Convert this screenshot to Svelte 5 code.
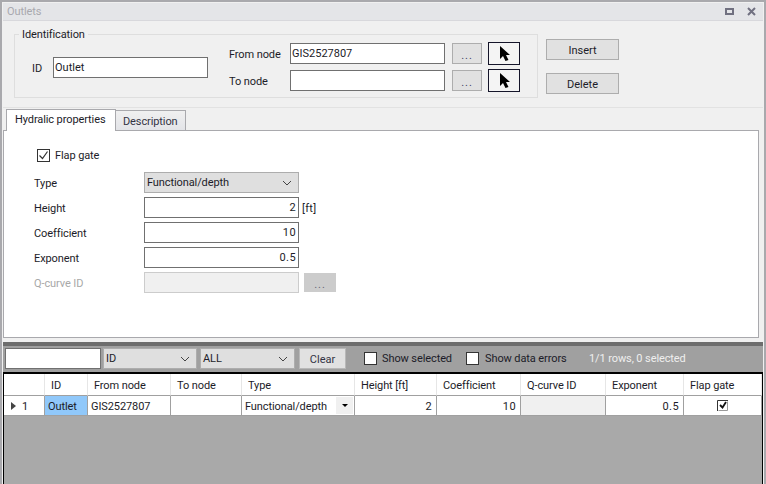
<script lang="ts">
	const columns = [
		{ label: 'ID', width: 43 },
		{ label: 'From node', width: 83 },
		{ label: 'To node', width: 71 },
		{ label: 'Type', width: 113 },
		{ label: 'Height [ft]', width: 82 },
		{ label: 'Coefficient', width: 84 },
		{ label: 'Q-curve ID', width: 85 },
		{ label: 'Exponent', width: 78 },
		{ label: 'Flap gate', width: 78 }
	];
	const fields = [
		{ label: 'Height', value: '2', unit: '[ft]' },
		{ label: 'Coefficient', value: '10' },
		{ label: 'Exponent', value: '0.5' }
	];
</script>

{#snippet arrow()}
	<svg width="11" height="15" viewBox="0 0 11 15">
		<path d="M1 0v13l3-3 2.500 5 3-1-2.500-5h4z" fill="#000" />
	</svg>
{/snippet}

{#snippet chevron()}
	<svg class="chevron" width="10" height="6" viewBox="0 0 10 6">
		<path d="M1 1l4 4 4-4" fill="none" stroke="#444" stroke-width="1" />
	</svg>
{/snippet}

<div class="window">
	<div class="titlebar">
		<span class="title">Outlets</span>
		<svg width="31" height="10" viewBox="0 0 31 10">
			<rect x="1" y="2" width="7" height="5" fill="none" stroke="#707080" stroke-width="2" />
			<path d="M23 1l7 7M30 1l-7 7" stroke="#707080" stroke-width="2" />
		</svg>
	</div>

	<div class="top">
		<fieldset class="identification">
			<legend>Identification</legend>
			<div class="id-body">
				<div class="id-row">
					<span>ID</span>
					<div class="input id-input">Outlet</div>
				</div>
				<div class="nodes">
					<span>From node</span>
					<div class="input">GIS2527807</div>
					<button class="btn dots">...</button>
					<button class="pick">{@render arrow()}</button>
					<span>To node</span>
					<div class="input"></div>
					<button class="btn dots">...</button>
					<button class="pick">{@render arrow()}</button>
				</div>
			</div>
		</fieldset>
		<div class="actions">
			<button class="btn action">Insert</button>
			<button class="btn action">Delete</button>
		</div>
	</div>

	<div class="tabs">
		<div class="tab active">Hydralic properties</div>
		<div class="tab">Description</div>
	</div>
	<div class="panel">
		<label class="flap">
			<span class="check">
				<svg width="11" height="11" viewBox="0 0 11 11"><path d="M1.500 5.500l3 3 5-7" fill="none" stroke="#333" stroke-width="1.200" /></svg>
			</span>
			Flap gate
		</label>
		<div class="form">
			<span>Type</span>
			<div class="select">Functional/depth {@render chevron()}</div>
			<span></span>
			{#each fields as field}
				<span>{field.label}</span>
				<div class="input number">{field.value}</div>
				<span class="unit">{field.unit ?? ''}</span>
			{/each}
			<span class="disabled">Q-curve ID</span>
			<div class="input off"></div>
			<button class="btn dots dark">...</button>
		</div>
	</div>

	<div class="strip"></div>
	<div class="toolbar">
		<div class="input search"></div>
		<div class="select tool-select id-select">ID {@render chevron()}</div>
		<div class="select tool-select">ALL {@render chevron()}</div>
		<button class="btn clear">Clear</button>
		<span class="box first-box"></span>
		<span class="opt show-selected">Show selected</span>
		<span class="box"></span>
		<span class="opt show-errors">Show data errors</span>
		<span class="count">1/1 rows, 0 selected</span>
	</div>

	<div class="grid">
		<table>
			<thead>
				<tr>
					<th class="row-head"></th>
					{#each columns as col}
						<th style="width: {col.width}px">{col.label}</th>
					{/each}
				</tr>
			</thead>
			<tbody>
				<tr>
					<td class="row-head"><span class="marker"></span>1</td>
					<td class="selected">Outlet</td>
					<td>GIS2527807</td>
					<td></td>
					<td class="type-cell">Functional/depth<span class="drop"><span></span></span></td>
					<td class="num">2</td>
					<td class="num">10</td>
					<td class="off-cell"></td>
					<td class="num">0.5</td>
					<td class="center">
						<svg width="11" height="11" viewBox="0 0 11 11">
							<path d="M.5 11V.5H11" fill="none" stroke="#333" />
							<path d="M1.500 10.500h9V1.500" fill="none" stroke="#999" />
							<path d="M3 5l2.500 2.500L9 2" fill="none" stroke="#111" stroke-width="1.800" />
						</svg>
					</td>
				</tr>
			</tbody>
		</table>
	</div>
</div>

<style>
	:global(body) {
		margin: 0;
		background: #f0f0f0;
	}

	.window {
		width: 766px;
		height: 484px;
		box-sizing: border-box;
		overflow: hidden;
		background: #f0f0f0;
		border-top: 2px solid #a9a9ad;
		border-left: 2px solid #a9a9ad;
		border-right: 2px solid #a9a9ad;
		padding: 1px 1px 0;
		font: 11px/14px Roboto, sans-serif;
		letter-spacing: -.1px;
		color: #1c1c28;
	}

	.titlebar {
		box-sizing: border-box;
		height: 18px;
		background: #e4e5e8;
		border-bottom: 1px solid #d8d8dc;
		display: flex;
		align-items: center;
		justify-content: space-between;
		padding: 0 7px 0 4px;
	}

	.title { color: #a8a8ae; }

	.top {
		height: 87px;
		box-sizing: border-box;
		display: flex;
		align-items: flex-start;
		gap: 8px;
		padding: 6px 0 0 11px;
		border-bottom: 1px solid #e2e2e2;
	}

	.identification {
		width: 524px;
		height: 71px;
		box-sizing: border-box;
		margin: 0;
		padding: 0;
		min-width: 0;
		border: 1px solid #dedede;
	}

	legend {
		padding: 1px 3px 0;
		margin-left: 4px;
		line-height: 14px;
	}

	.id-body {
		display: flex;
		gap: 21px;
		padding-left: 17px;
	}

	.id-row {
		width: 176px;
		display: flex;
		align-items: center;
		justify-content: space-between;
		margin-top: 15px;
		align-self: flex-start;
	}

	.id-row span,
	.nodes span,
	.form > span {
		padding-top: 2px;
	}

	.nodes {
		display: grid;
		grid-template-columns: 61px 155px 37px 36px;
		grid-template-rows: 23px 23px;
		row-gap: 4px;
		align-items: center;
	}

	.nodes .dots { margin-left: 7px; }
	.nodes .pick { margin-left: 6px; }

	.input {
		box-sizing: border-box;
		height: 21px;
		background: #fff;
		border: 1px solid #707070;
		line-height: 20px;
		letter-spacing: 0;
		padding: 0 1px;
		overflow: hidden;
	}

	.id-input { width: 155px; }

	.btn {
		box-sizing: border-box;
		background: #e1e1e1;
		border: 1px solid #adadad;
		font: inherit;
		color: inherit;
		padding: 2px 0 0;
	}

	.dots {
		width: 30px;
		height: 21px;
		padding: 4px 0 0;
		letter-spacing: 1px;
		color: #446;
	}

	.pick {
		box-sizing: border-box;
		width: 32px;
		height: 23px;
		padding: 0;
		background: #f4f4f4;
		border: 1px solid #15152a;
		display: flex;
		align-items: center;
		justify-content: center;
	}

	.actions {
		display: flex;
		flex-direction: column;
		gap: 13px;
		margin-top: 12px;
	}

	.action {
		width: 73px;
		height: 21px;
	}

	.tabs {
		height: 22px;
		display: flex;
		align-items: flex-end;
		padding-left: 3px;
	}

	.tab {
		box-sizing: border-box;
		width: 70px;
		height: 20px;
		background: linear-gradient(#f0f0f0, #e3e4e8);
		border: 1px solid #a9a9ad;
		border-bottom: none;
		border-left: none;
		padding: 4px 0 0 7px;
		color: #334;
	}

	.tab.active {
		width: 110px;
		height: 22px;
		background: #fff;
		border-left: 1px solid #a9a9ad;
		padding: 3px 0 0 8px;
		color: #1c1c28;
		position: relative;
		margin-bottom: -1px;
		z-index: 1;
	}

	.panel {
		box-sizing: border-box;
		width: 756px;
		height: 208px;
		background: #fff;
		border: 1px solid #a9a9ad;
		padding: 17px 0 0 30px;
	}

	.flap {
		display: flex;
		align-items: center;
		gap: 5px;
		margin-left: 3px;
		height: 15px;
	}

	.check {
		box-sizing: border-box;
		width: 13px;
		height: 13px;
		border: 1px solid #333;
		display: flex;
		align-items: center;
		justify-content: center;
	}

	.form {
		display: grid;
		grid-template-columns: 110px 155px auto;
		grid-auto-rows: 21px;
		row-gap: 4px;
		align-items: center;
		margin-top: 9px;
	}

	.select {
		box-sizing: border-box;
		height: 21px;
		background: #dfdfdf;
		border: 1px solid #adadad;
		padding: 1px 2px 0;
		display: flex;
		align-items: center;
		justify-content: space-between;
	}

	.chevron { margin-right: 4px; }

	.number {
		text-align: right;
		padding-right: 2px;
		letter-spacing: .4px;
	}

	.unit {
		margin-left: 3px;
		letter-spacing: .3px;
	}

	.disabled { color: #a8a8a8; }

	.off {
		background: #f0f0f0;
		border-color: #ccc;
	}

	.dark {
		width: 32px;
		height: 19px;
		margin-left: 5px;
		background: #ccc;
		border-color: #ccc;
		color: #667;
	}

	.strip {
		height: 8px;
		box-sizing: border-box;
		border-top: 4px solid #f0f0f0;
		background: #6d6d6d;
	}

	.toolbar {
		height: 26px;
		box-sizing: border-box;
		background: #a0a0a0;
		display: flex;
		align-items: center;
		padding: 0 0 1px 2px;
	}

	.search {
		width: 96px;
		flex: none;
	}

	.tool-select {
		width: 95px;
		margin-left: 3px;
		flex: none;
	}

	.id-select {
		width: 94px;
		margin-left: 2px;
	}

	.clear {
		width: 47px;
		height: 21px;
		margin-left: 4px;
		flex: none;
		border-color: #b8b8b8;
		color: #334;
	}

	.box {
		box-sizing: border-box;
		width: 13px;
		height: 13px;
		background: #fff;
		border: 1px solid #333;
		flex: none;
	}

	.first-box { margin-left: 18px; }
	.opt { margin-left: 5px; white-space: nowrap; }
	.show-selected { width: 84px; flex: none; }
	.show-errors { margin-left: 6px; width: 104px; flex: none; }
	.count { color: #efefef; white-space: nowrap; }

	.grid {
		height: 112px;
		box-sizing: border-box;
		background: #a9a9a9;
		border: 1px solid #000;
		border-top-width: 2px;
		border-bottom: none;
	}

	table {
		border-collapse: separate;
		border-spacing: 0;
		table-layout: fixed;
	}

	th, td {
		box-sizing: border-box;
		background: #fff;
		font-weight: 400;
		text-align: left;
		height: 20px;
		padding: 2px 0 0 3px;
		border-right: 1px solid #a0a0a0;
		border-bottom: 1px solid #a0a0a0;
		white-space: nowrap;
	}

	th {
		height: 22px;
		padding-left: 6px;
		border-right-color: #e6e6e6;
	}

	th.row-head { width: 41px; }
	td.row-head { padding-left: 7px; }

	.marker {
		display: inline-block;
		border-left: 5px solid #444;
		border-top: 4px solid transparent;
		border-bottom: 4px solid transparent;
		margin-right: 6px;
	}

	td.selected { background: #90c8fa; }
	td.num { text-align: right; padding-right: 4px; letter-spacing: .4px; }
	td.off-cell { background: #f0f0f0; }
	td.center { padding: 0; }
	td.center svg { display: block; margin: -1px 0 0 33px; }

	.type-cell { position: relative; }

	.drop {
		position: absolute;
		right: 1px;
		top: 1px;
		width: 17px;
		height: 17px;
		background: #f0f0f0;
		display: flex;
		align-items: center;
		justify-content: center;
	}

	.drop span {
		border-top: 3px solid #000;
		border-left: 3px solid transparent;
		border-right: 3px solid transparent;
	}
</style>
